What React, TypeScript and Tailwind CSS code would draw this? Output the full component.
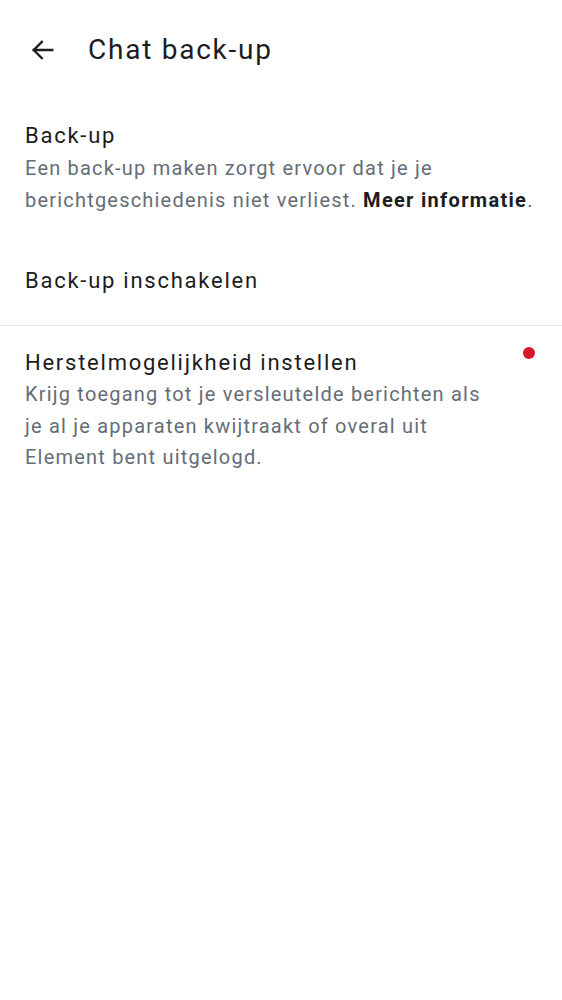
import React from 'react';

const BackArrow: React.FC = () => (
    <svg width="28" height="28" viewBox="0 0 24 24" fill="none" className="text-[#1b1d22]">
        <path d="M20 12H4M4 12l7-7M4 12l7 7" stroke="currentColor" strokeWidth="2" strokeLinecap="square" />
    </svg>
);

export default function App() {
    return (
        <div className="w-[562px] h-[1000px] bg-white font-['Roboto',sans-serif] text-[#1b1d22]">
            <header className="h-[100px] flex items-center">
                <button className="w-[88px] h-full flex items-center pl-[29px]">
                    <BackArrow />
                </button>
                <h1 className="text-[28px] leading-none tracking-[1.75px]">Chat back-up</h1>
            </header>

            <div className="px-[25px] pt-[20px]">
                <div className="text-[22px] leading-[32px] tracking-[1.75px]">Back-up</div>
                <p className="mt-[1px] text-[20px] leading-[31.5px] text-[#656d77] tracking-[1.2px]">
                    Een back-up maken zorgt ervoor dat je je berichtgeschiedenis niet verliest.{' '}
                    <span className="font-bold text-[#1b1d22] tracking-[1.3px]">Meer informatie</span>.
                </p>
            </div>

            <div className="px-[25px] pt-[49px] pb-[28px] text-[22px] leading-[32px] tracking-[1.75px]">
                Back-up inschakelen
            </div>

            <div className="h-px bg-[#e6e8ec]" />

            <div className="flex px-[25px] pt-[21px]">
                <div className="max-w-[468px]">
                    <div className="text-[22px] leading-[32px] tracking-[1.75px]">Herstelmogelijkheid instellen</div>
                    <p className="text-[20px] leading-[31.5px] text-[#656d77] tracking-[1.2px]">
                        Krijg toegang tot je versleutelde berichten als je al je apparaten kwijtraakt of overal uit Element bent uitgelogd.
                    </p>
                </div>
                <div className="ml-auto pr-[2px]">
                    <div className="w-[12px] h-[12px] rounded-full bg-[#d51928]" />
                </div>
            </div>
        </div>
    );
}
